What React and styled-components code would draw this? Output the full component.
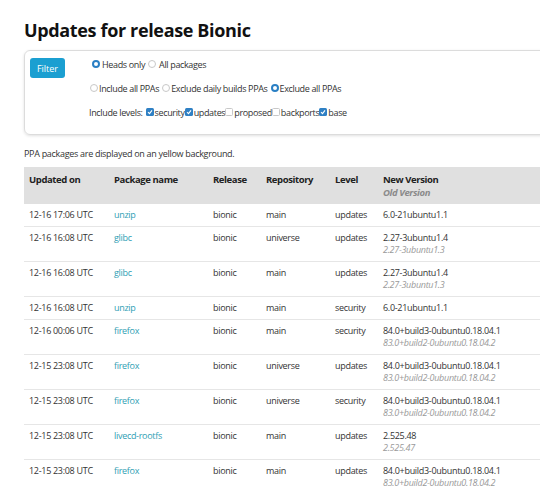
import React from "react";
import styled, { createGlobalStyle } from "styled-components";

const GlobalStyle = createGlobalStyle`
  html, body {
    margin: 0;
    padding: 0;
    background: #ffffff;
    overflow: hidden;
  }
  body {
    font-family: "Open Sans", "DejaVu Sans", sans-serif;
    color: #333333;
  }
`;

const Page = styled.div`
  width: 640px;
  padding: 18px 0 0 24px;
`;

const Title = styled.h1`
  font-size: 18px;
  font-weight: 700;
  color: #111111;
  margin: 0 0 8px 0;
  line-height: 24px;
  letter-spacing: -0.35px;
`;

const FilterPanel = styled.form`
  display: flex;
  align-items: flex-start;
  gap: 24px;
  border: 1px solid #dcdcdc;
  border-radius: 6px;
  box-shadow: 0 1px 3px rgba(0, 0, 0, 0.12);
  padding: 7px 5px 0 5px;
  height: 76px;
`;

const FilterButton = styled.button`
  width: 35px;
  height: 20px;
  border: none;
  border-radius: 3px;
  background: #1b9fd1;
  color: #ffffff;
  font-family: inherit;
  font-size: 9px;
  padding: 0;
  cursor: pointer;
`;

const Options = styled.div`
  display: flex;
  flex-direction: column;
  gap: 12px;
`;

const OptionRow = styled.div`
  display: flex;
  align-items: center;
  height: 12px;
  font-size: 9px;
  letter-spacing: -0.35px;
  color: #333333;
  white-space: nowrap;
  padding-left: ${(p) => p.$indent || 0}px;
`;

const Choice = styled.label`
  display: inline-flex;
  align-items: center;
  gap: ${(p) => p.$gap ?? 1}px;
  margin-right: ${(p) => p.$space ?? 0}px;
`;

const Radio = styled.span`
  display: inline-block;
  box-sizing: border-box;
  width: 8px;
  height: 8px;
  border-radius: 50%;
  border: ${(p) => (p.$on ? "2px solid #2a7fc4" : "1px solid #c8c8c8")};
  background: #ffffff;
`;

const Check = styled.span`
  display: inline-flex;
  align-items: center;
  justify-content: center;
  box-sizing: border-box;
  width: 8px;
  height: 8px;
  border-radius: 1.5px;
  background: ${(p) => (p.$on ? "#2f80c4" : "#ffffff")};
  border: ${(p) => (p.$on ? "none" : "1px solid #c8c8c8")};
`;

const Note = styled.p`
  font-size: 9px;
  letter-spacing: -0.3px;
  color: #333333;
  margin: 13px 0 7px 0;
  line-height: 12px;
`;

const Table = styled.table`
  width: 620px;
  border-collapse: collapse;
  table-layout: fixed;
  font-size: 9px;
  letter-spacing: -0.3px;
`;

const HeadRow = styled.tr`
  background: #e0e0e0;
`;

const HeadCell = styled.th`
  text-align: left;
  vertical-align: top;
  font-weight: 700;
  color: #222222;
  padding: 6px 5px 5px 5px;
  line-height: 13px;
  font-size: 9.5px;
  letter-spacing: -0.4px;
`;

const OldHead = styled.div`
  font-style: italic;
  color: #8a8a8a;
  font-weight: 700;
  font-size: 9.5px;
`;

const BodyRow = styled.tr`
  border-bottom: 1px solid #e6e6e6;
`;

const Cell = styled.td`
  vertical-align: top;
  padding: 5px;
  line-height: 12px;
  color: #333333;
  white-space: nowrap;
`;

const PkgLink = styled.a`
  color: #2fa0b4;
  text-decoration: none;
`;

const OldVersion = styled.div`
  font-style: italic;
  color: #9a9a9a;
`;

const CheckMark = () => (
  <svg width="6" height="6" viewBox="0 0 6 6">
    <path d="M1 3.2 L2.5 4.6 L5 1.4" stroke="#fff" strokeWidth="1.1" fill="none" />
  </svg>
);

const rows = [
  ["12-16 17:06 UTC", "unzip", "bionic", "main", "updates", "6.0-21ubuntu1.1", null],
  ["12-16 16:08 UTC", "glibc", "bionic", "universe", "updates", "2.27-3ubuntu1.4", "2.27-3ubuntu1.3"],
  ["12-16 16:08 UTC", "glibc", "bionic", "main", "updates", "2.27-3ubuntu1.4", "2.27-3ubuntu1.3"],
  ["12-16 16:08 UTC", "unzip", "bionic", "main", "security", "6.0-21ubuntu1.1", null],
  ["12-16 00:06 UTC", "firefox", "bionic", "main", "security", "84.0+build3-0ubuntu0.18.04.1", "83.0+build2-0ubuntu0.18.04.2"],
  ["12-15 23:08 UTC", "firefox", "bionic", "universe", "updates", "84.0+build3-0ubuntu0.18.04.1", "83.0+build2-0ubuntu0.18.04.2"],
  ["12-15 23:08 UTC", "firefox", "bionic", "universe", "security", "84.0+build3-0ubuntu0.18.04.1", "83.0+build2-0ubuntu0.18.04.2"],
  ["12-15 23:08 UTC", "livecd-rootfs", "bionic", "main", "updates", "2.525.48", "2.525.47"],
  ["12-15 23:08 UTC", "firefox", "bionic", "main", "updates", "84.0+build3-0ubuntu0.18.04.1", "83.0+build2-0ubuntu0.18.04.2"],
];

const levels = [
  ["security", true],
  ["updates", true],
  ["proposed", false],
  ["backports", false],
  ["base", true],
];

export default function App() {
  return (
    <>
      <GlobalStyle />
      <Page>
        <Title>Updates for release Bionic</Title>
        <FilterPanel onSubmit={(e) => e.preventDefault()}>
          <FilterButton>Filter</FilterButton>
          <Options>
            <OptionRow $indent={3}>
              <Choice $gap={2} $space={3}>
                <Radio $on />
                Heads only
              </Choice>
              <Choice $gap={3}>
                <Radio />
                All packages
              </Choice>
            </OptionRow>
            <OptionRow $indent={1}>
              <Choice $space={3}>
                <Radio />
                Include all PPAs
              </Choice>
              <Choice $space={3}>
                <Radio />
                Exclude daily builds PPAs
              </Choice>
              <Choice>
                <Radio $on />
                Exclude all PPAs
              </Choice>
            </OptionRow>
            <OptionRow>
              <Choice $space={3}>Include levels:</Choice>
              {levels.map(([name, on]) => (
                <Choice key={name}>
                  <Check $on={on}>{on && <CheckMark />}</Check>
                  {name}
                </Choice>
              ))}
            </OptionRow>
          </Options>
        </FilterPanel>
        <Note>PPA packages are displayed on an yellow background.</Note>
        <Table>
          <colgroup>
            <col style={{ width: 85 }} />
            <col style={{ width: 99 }} />
            <col style={{ width: 53 }} />
            <col style={{ width: 69 }} />
            <col style={{ width: 48 }} />
            <col />
          </colgroup>
          <thead>
            <HeadRow>
              <HeadCell>Updated on</HeadCell>
              <HeadCell>Package name</HeadCell>
              <HeadCell>Release</HeadCell>
              <HeadCell>Repository</HeadCell>
              <HeadCell>Level</HeadCell>
              <HeadCell>
                New Version
                <OldHead>Old Version</OldHead>
              </HeadCell>
            </HeadRow>
          </thead>
          <tbody>
            {rows.map((r, i) => (
              <BodyRow key={i}>
                <Cell>{r[0]}</Cell>
                <Cell>
                  <PkgLink href="#">{r[1]}</PkgLink>
                </Cell>
                <Cell>{r[2]}</Cell>
                <Cell>{r[3]}</Cell>
                <Cell>{r[4]}</Cell>
                <Cell>
                  {r[5]}
                  {r[6] && <OldVersion>{r[6]}</OldVersion>}
                </Cell>
              </BodyRow>
            ))}
          </tbody>
        </Table>
      </Page>
    </>
  );
}
